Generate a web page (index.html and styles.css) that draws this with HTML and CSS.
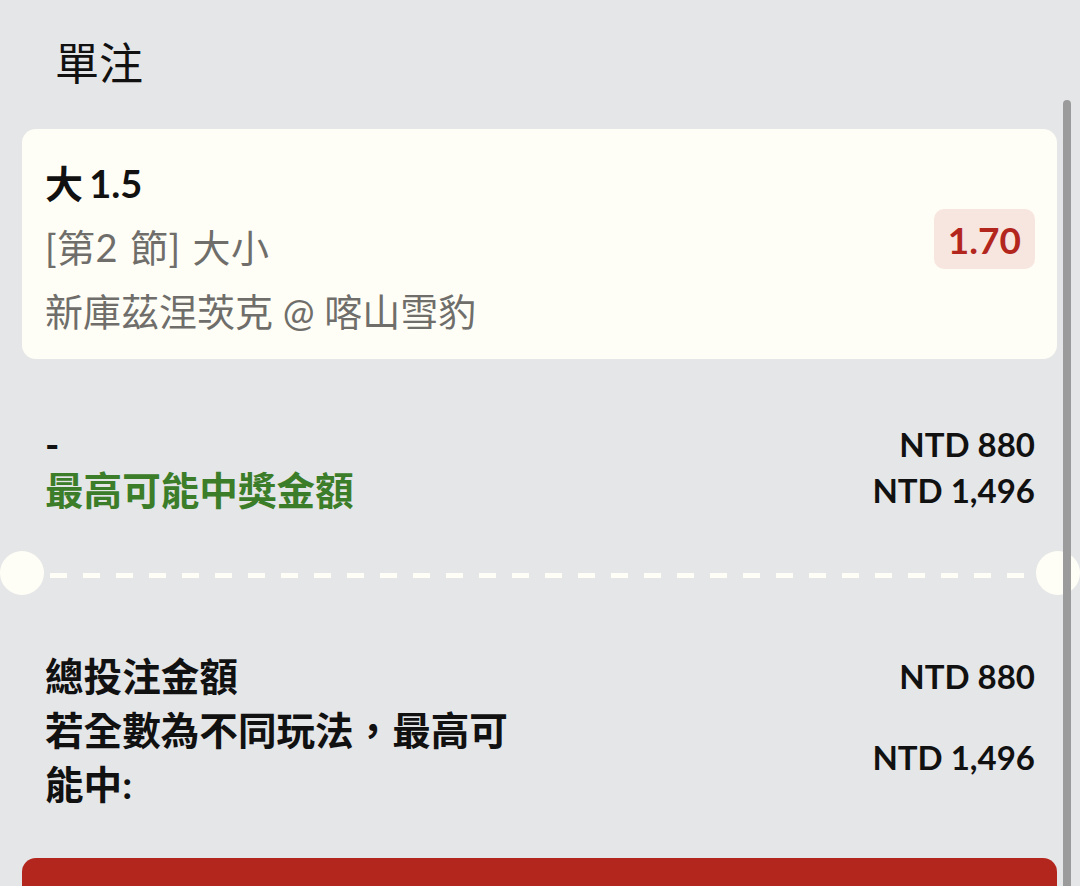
FILE: index.html
```html
<!DOCTYPE html>
<html lang="zh-Hant">
<head>
<meta charset="utf-8">
<title>單注</title>
<link rel="stylesheet" href="styles.css">
</head>
<body>
<div class="page">
  <header class="header">
    <h1 class="title">單注</h1>
  </header>
  <main class="content">
    <section class="bet-card">
      <div class="bet-info">
        <div class="bet-line bet-pick">大 1.5</div>
        <div class="bet-line bet-market">[第2 節] 大小</div>
        <div class="bet-line bet-match">新庫茲涅茨克 @ 喀山雪豹</div>
      </div>
      <div class="odds">1.70</div>
    </section>

    <section class="summary summary-single">
      <div class="row row-short">
        <span class="label">-</span>
        <span class="amount">NTD 880</span>
      </div>
      <div class="row row-short">
        <span class="label label-green">最高可能中獎金額</span>
        <span class="amount">NTD 1,496</span>
      </div>
    </section>

    <div class="divider">
      <span class="notch"></span>
      <span class="dashes"></span>
      <span class="notch"></span>
    </div>

    <section class="summary summary-total">
      <div class="row">
        <span class="label">總投注金額</span>
        <span class="amount">NTD 880</span>
      </div>
      <div class="row">
        <span class="label label-wrap">若全數為不同玩法，最高可能中:</span>
        <span class="amount">NTD 1,496</span>
      </div>
    </section>

    <button class="place-bet" type="button"></button>
  </main>
  <div class="scrollbar"></div>
</div>
</body>
</html>
```

FILE: styles.css
```css
* {
  box-sizing: border-box;
}

html, body {
  margin: 0;
  padding: 0;
}

body {
  background: #e5e6e8;
  font-family: "Lato", "Noto Sans CJK TC", sans-serif;
  color: #111111;
  width: 1080px;
  height: 886px;
  overflow: hidden;
}

.page {
  position: relative;
  height: 886px;
  overflow: hidden;
}

.header {
  height: 129px;
  padding: 37px 0 0 55px;
}

.title {
  margin: 0;
  font-family: "Noto Sans CJK TC", sans-serif;
  font-weight: 400;
  font-size: 44px;
  line-height: 48px;
  color: #111111;
}

.content {
  padding: 0 23px 0 22px;
}

.bet-card {
  display: flex;
  align-items: center;
  justify-content: space-between;
  background: #fffef6;
  border-radius: 14px;
  padding: 22px 22px 16px 23px;
}

.bet-line {
  font-size: 38px;
  line-height: 64px;
  white-space: nowrap;
}

.bet-pick {
  font-weight: 700;
  color: #111111;
  word-spacing: -3px;
}

.bet-market {
  word-spacing: 2px;
  letter-spacing: 0.4px;
}

.bet-market,
.bet-match {
  color: #6f6e6b;
  font-weight: 400;
}

.odds {
  height: 60px;
  padding: 0 14px;
  display: flex;
  align-items: center;
  border-radius: 10px;
  background: #f7e6df;
  color: #b3261e;
  font-weight: 700;
  font-size: 37px;
  margin-bottom: 16px;
}

.summary {
  padding: 0 22px 0 23px;
}

.summary-single {
  margin-top: 62px;
}

.row {
  display: flex;
  justify-content: space-between;
  align-items: center;
  font-weight: 700;
}

.label {
  font-size: 38.6px;
  line-height: 54px;
}

.row-short .label {
  line-height: 46px;
}

.label-green {
  color: #3c7d29;
}

.label-wrap {
  width: 490px;
}

.amount {
  font-size: 33px;
  white-space: nowrap;
  color: #111111;
}

.divider {
  display: flex;
  align-items: center;
  margin: 38px -23px 0 -22px;
  height: 44px;
}

.notch {
  flex: none;
  width: 44px;
  height: 44px;
  border-radius: 50%;
  background: #fffef6;
}

.dashes {
  flex: 1;
  height: 5px;
  margin: 4px 6px 0 6px;
  background: repeating-linear-gradient(90deg, #fffef6 0 17px, transparent 17px 33px);
}

.summary-total {
  margin-top: 54px;
}

.place-bet {
  display: block;
  width: 100%;
  height: 90px;
  margin-top: 47px;
  border: none;
  border-radius: 14px;
  background: #b3261e;
}

.scrollbar {
  position: absolute;
  top: 100px;
  left: 1063px;
  width: 8px;
  height: 800px;
  border-radius: 4px;
  background: #9b9b9b;
}
```
